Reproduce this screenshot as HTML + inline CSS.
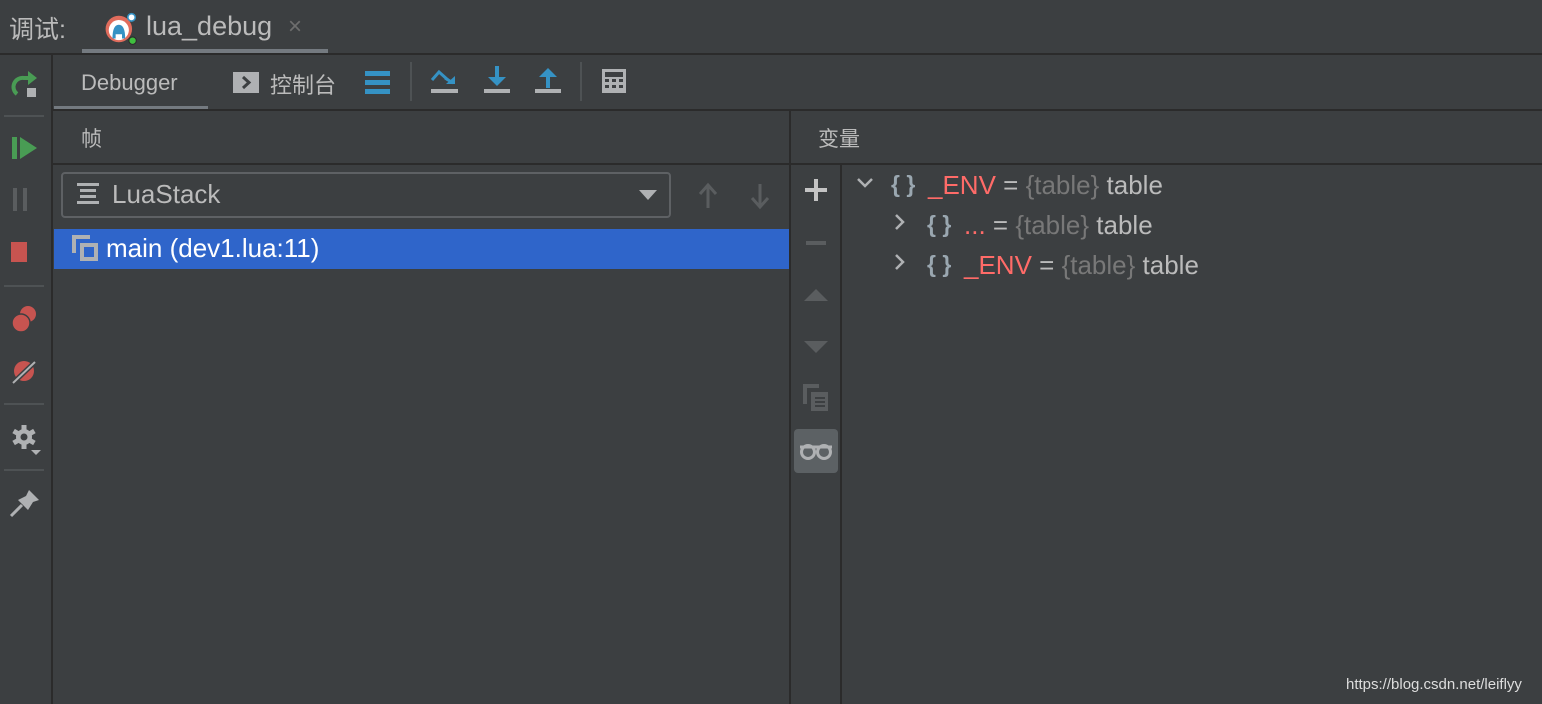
<!DOCTYPE html>
<html><head><meta charset="utf-8"><style>
*{margin:0;padding:0;box-sizing:border-box}
body{width:1542px;height:704px;background:#3c3f41;font-family:"Liberation Sans","Noto Sans CJK SC",sans-serif;color:#bbbbbb;position:relative;overflow:hidden}
.a{position:absolute}
.hl{position:absolute;background:#2b2b2b;height:2px}
.vl{position:absolute;background:#2b2b2b;width:2px}
</style></head><body>
<div class="a" style="left:9px;top:10px;font-size:25px;color:#bbb">调试:</div>
<svg class="a" style="left:104px;top:12px" width="36" height="34" viewBox="0 0 34 30"><circle cx="14" cy="15" r="12.5" fill="#e06c5c"/><circle cx="14" cy="16" r="9.5" fill="#fff"/><path d="M8 24 Q8 11 14 11 Q20 11 20 24 L17 24 L17 20 L11 20 L11 24Z" fill="#3592c4"/><circle cx="26" cy="4" r="3.5" fill="#fff" stroke="#3592c4" stroke-width="1.5"/><circle cx="27" cy="26" r="3.5" fill="#3fbf3f" stroke="#2b2b2b" stroke-width="1"/></svg>
<div class="a" style="left:146px;top:11px;font-size:27px;color:#bbb">lua_debug</div>
<div class="a" style="left:288px;top:13px;font-size:24px;color:#6e6e6e">×</div>
<div class="a" style="left:82px;top:49px;width:246px;height:5px;background:#747a80"></div>
<div class="hl" style="left:0;top:53px;width:1542px"></div>
<div class="vl" style="left:51px;top:55px;height:649px"></div>
<svg class="a" style="left:10px;top:68px" width="30" height="32" viewBox="0 0 30 32"><path d="M7 26 A9 9 0 0 1 14 10 L20 10" fill="none" stroke="#499c54" stroke-width="4"/><path d="M18 3 L27 10 L18 17Z" fill="#499c54"/><rect x="17" y="20" width="9" height="9" fill="#afb1b3"/></svg>
<div class="a" style="left:4px;top:115px;width:40px;height:2px;background:#4e5254"></div>
<svg class="a" style="left:12px;top:136px" width="28" height="24"><rect x="0" y="1" width="5" height="22" fill="#499c54"/><path d="M8 1 L25 12 L8 23Z" fill="#499c54"/></svg>
<svg class="a" style="left:12px;top:188px" width="28" height="24"><rect x="1" y="0" width="4" height="23" fill="#5a5d5f"/><rect x="11" y="0" width="4" height="23" fill="#5a5d5f"/></svg>
<div class="a" style="left:11px;top:242px;width:16px;height:20px;background:#c75450"></div>
<div class="a" style="left:4px;top:285px;width:40px;height:2px;background:#4e5254"></div>
<svg class="a" style="left:10px;top:304px" width="30" height="30"><circle cx="18" cy="10" r="8" fill="#c75450"/><circle cx="11" cy="19" r="9" fill="#c75450" stroke="#3c3f41" stroke-width="1.5"/></svg>
<svg class="a" style="left:10px;top:358px" width="30" height="30"><circle cx="14" cy="13" r="10" fill="#c75450"/><path d="M3 25 L25 4" stroke="#3c3f41" stroke-width="5"/><path d="M3 25 L25 4" stroke="#afb1b3" stroke-width="2"/></svg>
<div class="a" style="left:4px;top:403px;width:40px;height:2px;background:#4e5254"></div>
<svg class="a" style="left:10px;top:424px" width="32" height="34" viewBox="0 0 32 34"><g transform="translate(14,13)" fill="#afb1b3"><circle r="8"/><rect x="-2.5" y="-12" width="5" height="24"/><rect x="-2.5" y="-12" width="5" height="24" transform="rotate(60)"/><rect x="-2.5" y="-12" width="5" height="24" transform="rotate(120)"/></g><circle cx="14" cy="13" r="3.5" fill="#3c3f41"/><path d="M21 26 L31 26 L26 31Z" fill="#afb1b3"/></svg>
<div class="a" style="left:4px;top:469px;width:40px;height:2px;background:#4e5254"></div>
<svg class="a" style="left:8px;top:488px" width="32" height="32"><path d="M21 2 L31 12 L25 14 L20 22 L10 12 L18 8Z" fill="#afb1b3"/><path d="M14 17 L3 28" stroke="#afb1b3" stroke-width="3"/></svg>
<div class="a" style="left:81px;top:70px;font-size:22px;color:#bbb">Debugger</div>
<div class="a" style="left:54px;top:106px;width:154px;height:4px;background:#747a80"></div>
<svg class="a" style="left:233px;top:72px" width="26" height="22"><rect width="26" height="21" fill="#afb1b3"/><path d="M10 5 L16 10.5 L10 16" fill="none" stroke="#3c3f41" stroke-width="3"/></svg>
<div class="a" style="left:270px;top:68px;font-size:22px;color:#bbb">控制台</div>
<svg class="a" style="left:365px;top:71px" width="26" height="24"><rect y="0" width="25" height="5" fill="#3592c4"/><rect y="9" width="25" height="5" fill="#3592c4"/><rect y="18" width="25" height="5" fill="#3592c4"/></svg>
<div class="a" style="left:410px;top:62px;width:2px;height:39px;background:#4e5254"></div>
<svg class="a" style="left:430px;top:66px" width="30" height="30"><path d="M2 14 L9 6 L18 14" fill="none" stroke="#3592c4" stroke-width="3"/><path d="M16 18 L25 18 L25 10Z" fill="#3592c4"/><path d="M15 12 L23 17" stroke="#3592c4" stroke-width="3"/><rect x="1" y="23" width="27" height="4" fill="#afb1b3"/></svg>
<svg class="a" style="left:483px;top:66px" width="28" height="30"><rect x="12" y="0" width="4" height="14" fill="#3592c4"/><path d="M5 11 L23 11 L14 20Z" fill="#3592c4"/><rect x="1" y="23" width="26" height="4" fill="#afb1b3"/></svg>
<svg class="a" style="left:534px;top:66px" width="28" height="30"><rect x="12" y="8" width="4" height="14" fill="#3592c4"/><path d="M5 11 L23 11 L14 2Z" fill="#3592c4"/><rect x="1" y="23" width="26" height="4" fill="#afb1b3"/></svg>
<div class="a" style="left:580px;top:62px;width:2px;height:39px;background:#4e5254"></div>
<svg class="a" style="left:602px;top:69px" width="24" height="26"><rect width="24" height="24" fill="#afb1b3"/><rect x="3" y="3" width="18" height="5" fill="#3c3f41"/><g fill="#3c3f41"><rect x="3" y="10" width="4" height="3"/><rect x="10" y="10" width="4" height="3"/><rect x="17" y="10" width="4" height="3"/><rect x="3" y="16" width="4" height="3"/><rect x="10" y="16" width="4" height="3"/><rect x="17" y="16" width="4" height="3"/></g></svg>
<div class="hl" style="left:52px;top:109px;width:1490px"></div>
<div class="a" style="left:81px;top:123px;font-size:21px;color:#bbb">帧</div>
<div class="hl" style="left:52px;top:163px;width:738px"></div>
<div class="a" style="left:61px;top:172px;width:610px;height:46px;border:2px solid #5e6164;border-radius:4px;background:#3c3f41"></div>
<svg class="a" style="left:77px;top:183px" width="22" height="22"><rect x="0" y="0" width="22" height="3" fill="#afb1b3"/><rect x="3" y="6" width="16" height="3" fill="#afb1b3"/><rect x="3" y="12" width="16" height="3" fill="#afb1b3"/><rect x="0" y="18" width="22" height="3" fill="#afb1b3"/></svg>
<div class="a" style="left:112px;top:179px;font-size:26px;color:#bbb">LuaStack</div>
<svg class="a" style="left:639px;top:190px" width="20" height="12"><path d="M0 0 L18 0 L9 10Z" fill="#afb1b3"/></svg>
<svg class="a" style="left:697px;top:182px" width="24" height="28"><path d="M11 26 L11 4 M3 12 L11 3 L19 12" fill="none" stroke="#5a5d5f" stroke-width="3"/></svg>
<svg class="a" style="left:749px;top:182px" width="24" height="28"><path d="M11 2 L11 24 M3 16 L11 25 L19 16" fill="none" stroke="#5a5d5f" stroke-width="3"/></svg>
<div class="a" style="left:54px;top:229px;width:736px;height:40px;background:#2f65ca"></div>
<svg class="a" style="left:72px;top:235px" width="28" height="28"><path d="M2 18 L2 2 L18 2" fill="none" stroke="#afb1b3" stroke-width="4"/><rect x="10" y="10" width="14" height="14" fill="none" stroke="#afb1b3" stroke-width="4"/></svg>
<div class="a" style="left:106px;top:233px;font-size:26px;color:#fff">main (dev1.lua:11)</div>
<div class="vl" style="left:789px;top:110px;height:594px"></div>
<div class="a" style="left:818px;top:123px;font-size:21px;color:#bbb">变量</div>
<div class="hl" style="left:791px;top:163px;width:751px"></div>
<div class="vl" style="left:840px;top:165px;height:539px"></div>
<svg class="a" style="left:805px;top:179px" width="22" height="22"><rect x="9" y="0" width="4" height="22" fill="#c4c4c4"/><rect x="0" y="9" width="22" height="4" fill="#c4c4c4"/></svg>
<div class="a" style="left:806px;top:241px;width:20px;height:4px;background:#5a5d5f"></div>
<svg class="a" style="left:804px;top:288px" width="24" height="14"><path d="M0 13 L12 1 L24 13Z" fill="#5a5d5f"/></svg>
<svg class="a" style="left:804px;top:340px" width="24" height="14"><path d="M0 1 L12 13 L24 1Z" fill="#5a5d5f"/></svg>
<svg class="a" style="left:803px;top:384px" width="26" height="28"><path d="M2 20 L2 2 L16 2" fill="none" stroke="#5a5d5f" stroke-width="4"/><rect x="8" y="8" width="17" height="19" fill="#5a5d5f"/><g fill="#3c3f41"><rect x="12" y="13" width="10" height="2"/><rect x="12" y="17" width="10" height="2"/><rect x="12" y="21" width="10" height="2"/></g></svg>
<div class="a" style="left:794px;top:429px;width:44px;height:44px;background:#5c6164;border-radius:4px"></div>
<svg class="a" style="left:798px;top:441px" width="36" height="20"><path d="M2 6 L34 6" stroke="#afb1b3" stroke-width="3"/><circle cx="10" cy="11" r="6.5" fill="none" stroke="#afb1b3" stroke-width="3"/><circle cx="26" cy="11" r="6.5" fill="none" stroke="#afb1b3" stroke-width="3"/></svg>
<div class="a" style="left:0;top:0;font-size:26px;white-space:nowrap">
<svg class="a" style="left:856px;top:177px" width="20" height="14"><path d="M2 2 L9 9 L16 2" fill="none" stroke="#afb1b3" stroke-width="2.5"/></svg>
<span class="a" style="left:891px;top:171px;color:#9aa7b0;font-weight:bold;font-size:23px">{ }</span>
<span class="a" style="left:928px;top:170px"><span style="color:#ff6b68">_ENV</span> = <span style="color:#787878">{table}</span> table</span>
<svg class="a" style="left:893px;top:213px" width="14" height="20"><path d="M3 2 L10 9 L3 16" fill="none" stroke="#afb1b3" stroke-width="2.5"/></svg>
<span class="a" style="left:927px;top:211px;color:#9aa7b0;font-weight:bold;font-size:23px">{ }</span>
<span class="a" style="left:964px;top:210px"><span style="color:#ff6b68">...</span> = <span style="color:#787878">{table}</span> table</span>
<svg class="a" style="left:893px;top:253px" width="14" height="20"><path d="M3 2 L10 9 L3 16" fill="none" stroke="#afb1b3" stroke-width="2.5"/></svg>
<span class="a" style="left:927px;top:251px;color:#9aa7b0;font-weight:bold;font-size:23px">{ }</span>
<span class="a" style="left:964px;top:250px"><span style="color:#ff6b68">_ENV</span> = <span style="color:#787878">{table}</span> table</span>
</div>
<div class="a" style="left:1346px;top:676px;font-size:15px;color:#ddd">https://blog.csdn.net/leiflyy</div>
</body></html>
